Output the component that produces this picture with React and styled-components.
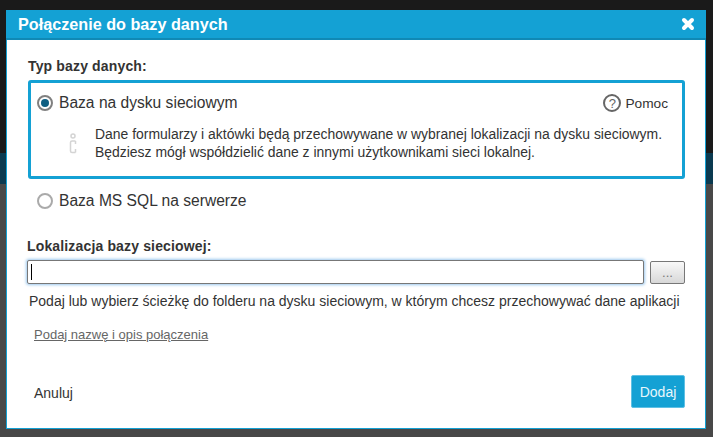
import styled, { createGlobalStyle } from 'styled-components'

const GlobalStyle = createGlobalStyle`
  html, body {
    margin: 0;
    padding: 0;
    background: #484848;
  }
  * {
    box-sizing: border-box;
  }
`

const Backdrop = styled.div`
  width: 713px;
  height: 437px;
  padding: 10px 7px 8px 6px;
  background: linear-gradient(#1a1a1a 0, #1a1a1a 153px, #0b3a50 153px, #0b3a50 184px, #484848 184px);
  font-family: 'Liberation Sans', Arial, sans-serif;
  overflow: hidden;
`

const Modal = styled.div`
  width: 700px;
  height: 419px;
  background: #fff;
  border: 1px solid #12a0d3;
  border-top: 0;
  display: flex;
  flex-direction: column;
`

const Header = styled.div`
  height: 30px;
  margin: 0 -1px;
  padding: 0 12px;
  display: flex;
  align-items: center;
  justify-content: space-between;
  background: #14a1d4;
  border-bottom: 2px solid #1089b5;
`

const Title = styled.h1`
  margin: 0;
  font-size: 16.2px;
  font-weight: 700;
  color: #fff;
`

const Close = styled.svg`
  width: 14px;
  height: 14px;
  margin-right: -1px;
`

const Body = styled.div`
  flex: 1;
  padding: 17px 20px 20px 21px;
  display: flex;
  flex-direction: column;
`

const Label = styled.div`
  font-size: 14px;
  font-weight: 700;
  color: #333;
  line-height: 18px;
  letter-spacing: 0.15px;
`

const SelectedBox = styled.div`
  margin-top: 5px;
  height: 99px;
  border: 3px solid #14a1d4;
  border-radius: 3px;
  padding: 7px 14px 0 6px;
`

const OptionRow = styled.div`
  display: flex;
  align-items: center;
  gap: 6px;
  height: 26px;
  font-size: 15.6px;
  color: #333;
`

const Radio = styled.span`
  width: 16px;
  height: 16px;
  border-radius: 50%;
  border: 2.5px solid ${(p) => (p.$checked ? '#808080' : '#aaa')};
  background: #fff;
  display: flex;
  align-items: center;
  justify-content: center;
  &::after {
    content: '';
    width: 8px;
    height: 8px;
    border-radius: 50%;
    background: ${(p) => (p.$checked ? '#0f5f82' : 'transparent')};
  }
`

const Help = styled.div`
  margin-left: auto;
  display: flex;
  align-items: center;
  gap: 4px;
  font-size: 13.7px;
`

const HelpMark = styled.span`
  width: 18px;
  height: 18px;
  border: 2px solid #666;
  border-radius: 50%;
  display: flex;
  align-items: center;
  justify-content: center;
  font-size: 13px;
  color: #666;
`

const Info = styled.div`
  margin-top: 9px;
  display: flex;
  align-items: center;
`

const InfoIcon = styled.svg`
  width: 8px;
  height: 21px;
  margin-left: 32px;
  margin-right: 18px;
`

const InfoText = styled.div`
  font-size: 13.95px;
  line-height: 18px;
  color: #333;
  white-space: nowrap;
`

const PlainOption = styled(OptionRow)`
  margin-top: 9px;
  padding-left: 9px;
`

const LocationLabel = styled(Label)`
  margin-top: 23px;
  margin-left: -1px;
`

const PathRow = styled.div`
  margin-top: 5px;
  display: flex;
  align-items: center;
  gap: 6px;
`

const PathInput = styled.input`
  width: 617px;
  height: 24px;
  margin-left: -1px;
  border: 1px solid #777;
  border-radius: 2px;
  box-shadow: 0 0 3px 1px #9cc8ee;
  padding: 0 3px;
  outline: none;
`

const Caret = styled.span`
  position: absolute;
  width: 1px;
  height: 16px;
  background: #000;
  margin-left: 3px;
`

const BrowseButton = styled.button`
  width: 35px;
  height: 23px;
  border: 1px solid #777;
  border-radius: 2px;
  background: linear-gradient(#f8f8f8, #d8d8d8);
  color: #777;
  font-size: 13px;
  padding: 0;
`

const Hint = styled.div`
  margin-top: 8px;
  padding-left: 1px;
  font-size: 14px;
  line-height: 18px;
  color: #333;
  white-space: nowrap;
`

const DetailsLink = styled.a`
  margin-top: 17px;
  margin-left: 6px;
  font-size: 13px;
  line-height: 16px;
  color: #666;
  text-decoration: underline;
`

const Footer = styled.div`
  margin-top: auto;
  display: flex;
  align-items: center;
  justify-content: space-between;
`

const CancelLink = styled.a`
  margin: 2px 0 0 6px;
  font-size: 14px;
  color: #333;
`

const AddButton = styled.button`
  width: 54px;
  height: 33px;
  border: 1px solid #5fc0e4;
  border-radius: 2px;
  background: #14a1d4;
  color: #e8f7fc;
  font-family: inherit;
  font-size: 14px;
  padding: 0;
`

export default function App() {
  return (
    <Backdrop>
      <GlobalStyle />
      <Modal>
        <Header>
          <Title>Połączenie do bazy danych</Title>
          <Close viewBox="0 0 14 14">
            <path d="M3 3 L11 11 M11 3 L3 11" fill="none" stroke="#fff" strokeWidth="4" strokeLinecap="round" />
          </Close>
        </Header>
        <Body>
          <Label>Typ bazy danych:</Label>
          <SelectedBox>
            <OptionRow>
              <Radio $checked />
              Baza na dysku sieciowym
              <Help>
                <HelpMark>?</HelpMark>
                Pomoc
              </Help>
            </OptionRow>
            <Info>
              <InfoIcon viewBox="0 0 8 21">
                <circle cx="4" cy="3" r="2" fill="none" stroke="#d4d4d4" strokeWidth="1.5" />
                <path d="M6.5 8 H3 a1.5 1.5 0 0 0 -1.5 1.5 V18 a1.5 1.5 0 0 0 1.5 1.5 H6.5 M6.5 8 V11 M6.5 16 V19.5" fill="none" stroke="#d4d4d4" strokeWidth="1.5" />
              </InfoIcon>
              <InfoText>
                Dane formularzy i aktówki będą przechowywane w wybranej lokalizacji na dysku sieciowym.
                <br />
                Będziesz mógł współdzielić dane z innymi użytkownikami sieci lokalnej.
              </InfoText>
            </Info>
          </SelectedBox>
          <PlainOption>
            <Radio />
            Baza MS SQL na serwerze
          </PlainOption>
          <LocationLabel>Lokalizacja bazy sieciowej:</LocationLabel>
          <PathRow>
            <Caret />
            <PathInput />
            <BrowseButton>...</BrowseButton>
          </PathRow>
          <Hint>Podaj lub wybierz ścieżkę do folderu na dysku sieciowym, w którym chcesz przechowywać dane aplikacji</Hint>
          <DetailsLink>Podaj nazwę i opis połączenia</DetailsLink>
          <Footer>
            <CancelLink>Anuluj</CancelLink>
            <AddButton>Dodaj</AddButton>
          </Footer>
        </Body>
      </Modal>
    </Backdrop>
  )
}
